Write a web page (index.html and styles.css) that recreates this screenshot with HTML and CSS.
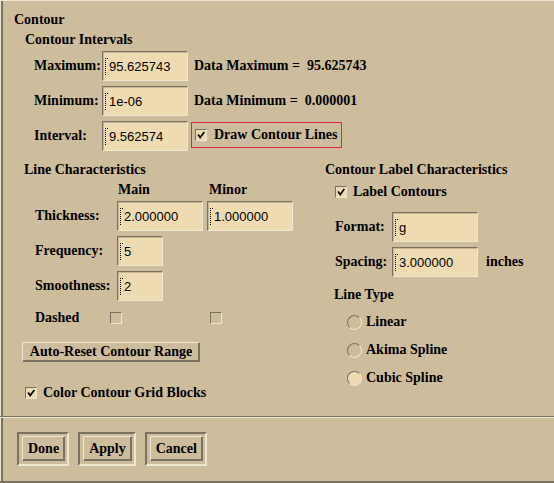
FILE: index.html
```html
<!DOCTYPE html>
<html lang="en">

<head>
    <meta charset="UTF-8">
    <title>Contour</title>
    <link rel="stylesheet" href="styles.css">
</head>

<body>
    <div class="dialog">
        <div class="main">
            <div class="title">Contour</div>
            <div class="heading intervals-head">Contour Intervals</div>
            <div class="interval-grid">
                <span class="lbl">Maximum:</span>
                <div class="field"><span class="cursor"></span>95.625743</div>
                <span class="info">Data Maximum =  95.625743</span>

                <span class="lbl">Minimum:</span>
                <div class="field"><span class="cursor"></span>1e-06</div>
                <span class="info">Data Minimum =  0.000001</span>

                <span class="lbl">Interval:</span>
                <div class="field"><span class="cursor"></span>9.562574</div>
                <div class="toggle focused">
                    <span class="check on"><svg viewBox="0 0 12 12"><path d="M2.5 5.5 L5 9 L10 2.5" /></svg></span>
                    Draw Contour Lines
                </div>
            </div>

            <div class="columns">
                <div class="col-left">
                    <div class="heading">Line Characteristics</div>
                    <div class="line-head">
                        <span></span><span class="colname">Main</span><span class="colname minor">Minor</span>
                    </div>
                    <div class="line-grid">
                        <span class="lbl">Thickness:</span>
                        <div class="field"><span class="cursor"></span>2.000000</div>
                        <div class="field"><span class="cursor"></span>1.000000</div>

                        <span class="lbl">Frequency:</span>
                        <div class="field short"><span class="cursor"></span>5</div>
                        <span></span>

                        <span class="lbl">Smoothness:</span>
                        <div class="field short"><span class="cursor"></span>2</div>
                        <span></span>
                    </div>
                    <div class="dashed-row">
                        <span class="dashed-lbl">Dashed</span>
                        <span class="box"></span>
                        <span class="box second"></span>
                    </div>
                    <div class="push reset-btn">Auto-Reset Contour Range</div>
                    <div class="toggle color-row">
                        <span class="check on"><svg viewBox="0 0 12 12"><path d="M2.5 5.5 L5 9 L10 2.5" /></svg></span>
                        Color Contour Grid Blocks
                    </div>
                </div>

                <div class="col-right">
                    <div class="heading">Contour Label Characteristics</div>
                    <div class="toggle label-row">
                        <span class="check on"><svg viewBox="0 0 12 12"><path d="M2.5 5.5 L5 9 L10 2.5" /></svg></span>
                        Label Contours
                    </div>
                    <div class="format-grid">
                        <span class="lbl">Format:</span>
                        <div class="field"><span class="cursor"></span>g</div>
                        <span></span>

                        <span class="lbl">Spacing:</span>
                        <div class="field"><span class="cursor"></span>3.000000</div>
                        <span class="units">inches</span>
                    </div>
                    <div class="heading linetype-head">Line Type</div>
                    <div class="radios">
                        <div class="radio-row"><span class="radio"></span>Linear</div>
                        <div class="radio-row"><span class="radio"></span>Akima Spline</div>
                        <div class="radio-row"><span class="radio on"></span>Cubic Spline</div>
                    </div>
                </div>
            </div>
        </div>

        <div class="sep"></div>

        <div class="actions">
            <div class="default-frame"><div class="push act">Done</div></div>
            <div class="default-frame"><div class="push act">Apply</div></div>
            <div class="default-frame"><div class="push act">Cancel</div></div>
        </div>
    </div>
</body>

</html>
```

FILE: styles.css
```css
* {
    box-sizing: border-box;
}

body {
    margin: 0;
    background-color: #cebd9c;
    font: bold 14px/16px "Liberation Serif", "Times New Roman", serif;
    color: #000;
}

.dialog {
    width: 554px;
    height: 483px;
    display: flex;
    flex-direction: column;
    border-top: 1px solid #efe6d2;
    border-bottom: 2px solid #7b7160;
    box-shadow: inset 1px 0 #efe6d2, inset 3px 0 #7b7160;
}

.main {
    flex: 1;
    padding: 11px 0 0 14px;
}

.heading {
    height: 16px;
}

.intervals-head {
    margin: 4px 0 0 11px;
}

/* text fields */
.field {
    height: 30px;
    width: 86px;
    display: flex;
    align-items: center;
    padding-left: 3px;
    background-color: #efdbb1;
    border: 1px solid;
    border-color: #7b7160 #efe6d2 #efe6d2 #7b7160;
    box-shadow: inset 1px 1px rgba(123, 113, 96, 0.35);
    font: normal 13px "Liberation Sans", Arial, sans-serif;
    white-space: nowrap;
}

.field.short {
    width: 46px;
}

.cursor {
    display: inline-block;
    width: 3px;
    height: 17px;
    border-left: 1px dotted #000;
    border-top: 1px dotted #000;
    transform: translateX(-1px);
}

.lbl {
    white-space: nowrap;
}

.interval-grid {
    display: grid;
    grid-template-columns: 68px 86px auto;
    grid-auto-rows: 30px;
    row-gap: 5px;
    align-items: center;
    margin: 3px 0 0 20px;
}

.info {
    margin-left: 6px;
    white-space: pre;
}

/* toggles */
.toggle {
    display: flex;
    align-items: center;
    gap: 6px;
    height: 16px;
    white-space: nowrap;
}

.toggle.focused {
    justify-self: start;
    align-self: start;
    height: 26px;
    margin: 1px 0 0 3px;
    padding: 0 4px 0 3px;
    gap: 7px;
    border: 1px solid #e0234f;
}

.check {
    width: 12px;
    height: 12px;
    flex: none;
    background-color: #efdbb1;
    border: 1px solid;
    border-color: #7b7160 #efe6d2 #efe6d2 #7b7160;
    display: flex;
}

.check svg {
    width: 10px;
    height: 10px;
}

.check path {
    fill: none;
    stroke: #000;
    stroke-width: 2;
}

.box {
    width: 12px;
    height: 12px;
    border: 1px solid;
    border-color: #7b7160 #efe6d2 #efe6d2 #7b7160;
}

/* two columns */
.columns {
    display: flex;
    margin-top: 11px;
}

.col-left {
    width: 301px;
    margin-left: 10px;
}

.line-head {
    display: grid;
    grid-template-columns: 82px 86px 86px;
    height: 16px;
    margin: 4px 0 3px 11px;
}

.colname {
    padding-left: 1px;
}

.colname.minor {
    padding-left: 6px;
}

.line-grid {
    display: grid;
    grid-template-columns: 82px 86px 90px;
    grid-auto-rows: 30px;
    row-gap: 5px;
    align-items: center;
    margin-left: 11px;
}

.line-grid .field + .field {
    margin-left: 4px;
}

.dashed-row {
    display: flex;
    align-items: center;
    height: 16px;
    margin: 9px 0 0 11px;
}

.dashed-lbl {
    width: 75px;
}

.box.second {
    margin-left: 88px;
}

.push {
    border: 1px solid;
    border-color: #efe6d2 #7b7160 #7b7160 #efe6d2;
    display: flex;
    align-items: center;
    justify-content: center;
    white-space: nowrap;
}

.reset-btn {
    width: 178px;
    height: 20px;
    margin: 16px 0 0 -2px;
    box-shadow: inset -1px -1px #7b7160;
}

.color-row {
    margin: 23px 0 0 1px;
}

.col-right {
    flex: 1;
}

.label-row {
    margin: 6px 0 0 10px;
}

.format-grid {
    display: grid;
    grid-template-columns: 57px 86px auto;
    grid-auto-rows: 30px;
    row-gap: 5px;
    align-items: center;
    margin: 12px 0 0 10px;
}

.units {
    margin-left: 8px;
}

.linetype-head {
    margin: 10px 0 0 9px;
}

.radios {
    margin: 5px 0 0 22px;
}

.radio-row {
    display: flex;
    align-items: center;
    gap: 4px;
    height: 28px;
}

.radio {
    width: 15px;
    height: 15px;
    border-radius: 50%;
    border: 1px solid;
    border-color: #7b7160 #efe6d2 #efe6d2 #7b7160;
}

.radio.on {
    background-color: #efdbb1;
    box-shadow: inset 1px 1px #efe6d2;
}

/* bottom action area */
.sep {
    height: 2px;
    border-top: 1px solid #7b7160;
    border-bottom: 1px solid #efe6d2;
}

.actions {
    height: 63px;
    display: flex;
    align-items: flex-start;
    gap: 9px;
    padding: 14px 0 0 17px;
}

.default-frame {
    border: 2px solid;
    border-color: #7b7160 #efe6d2 #efe6d2 #7b7160;
    padding: 2px 2px 3px 3px;
}

.act {
    height: 25px;
    padding: 0 5px;
    box-shadow: inset -1px -1px #7b7160;
}
```
